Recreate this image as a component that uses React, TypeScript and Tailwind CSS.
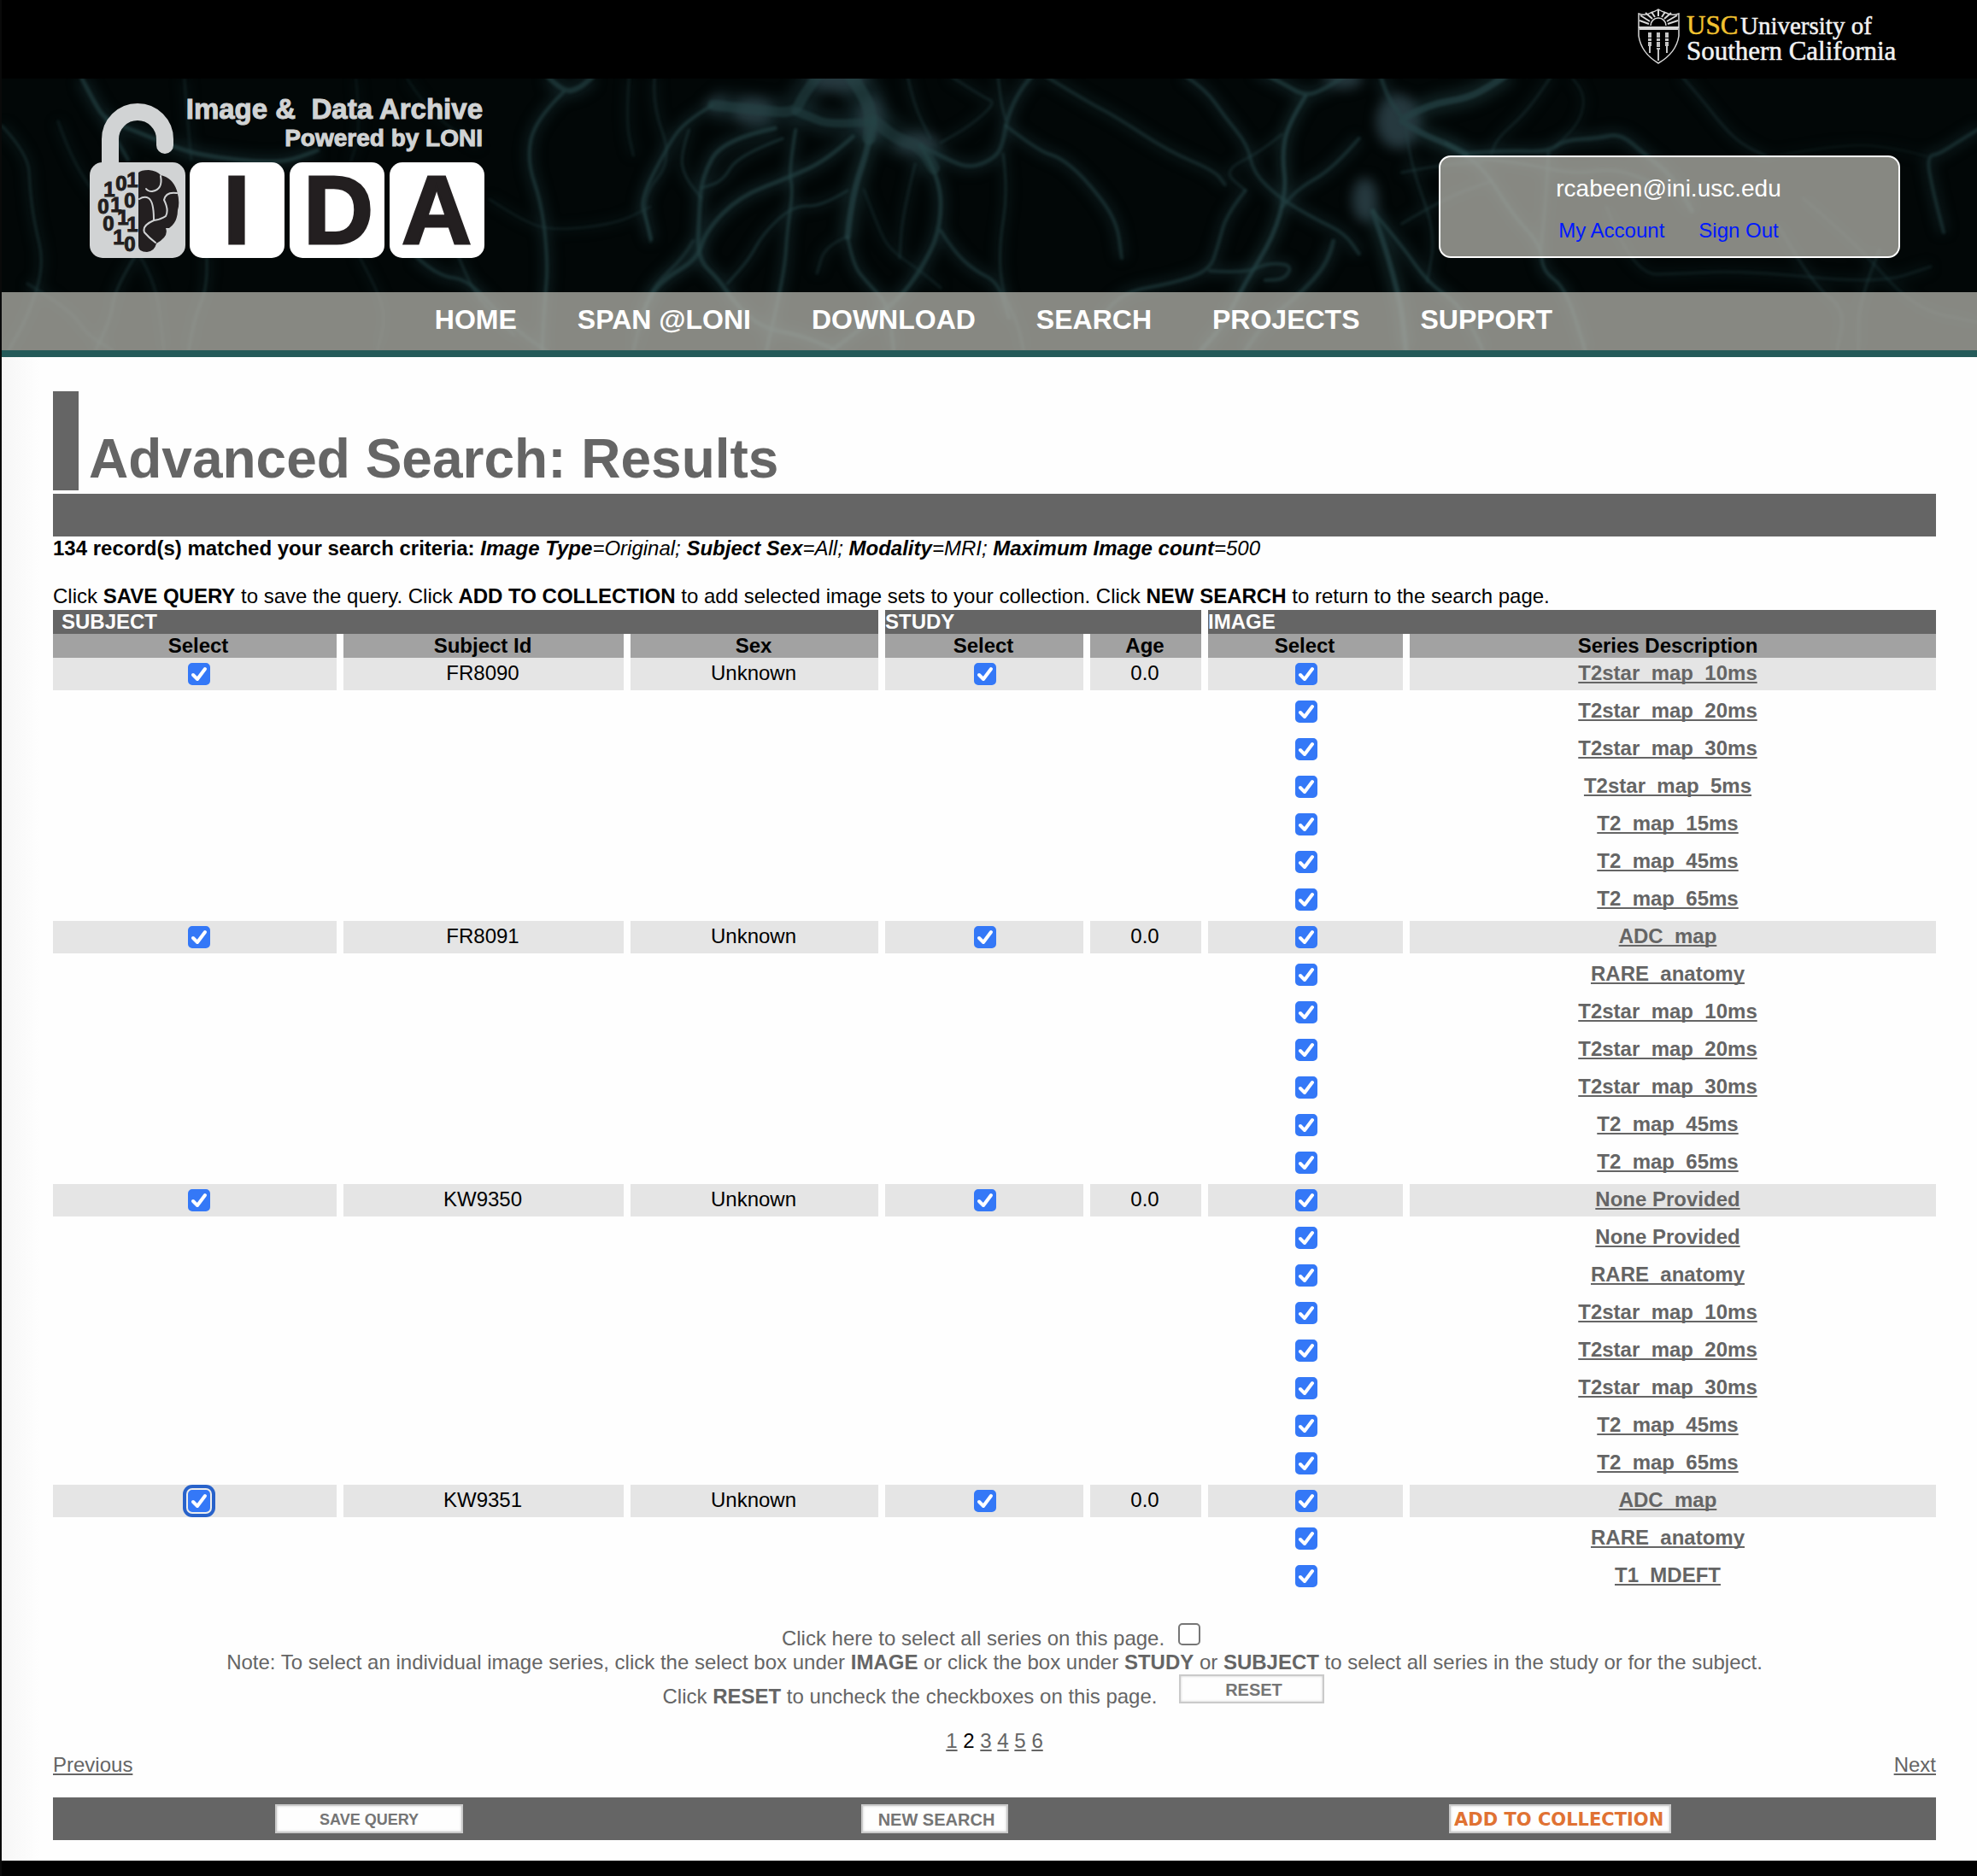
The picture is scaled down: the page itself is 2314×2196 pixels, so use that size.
import React from "react";

type Point = [number, number];
type Fiber = { width: number; tone: number; points: Point[] };

const fibers: Fiber[] = [
  { width: 5, tone: 0.8, points: [[94, 0], [110, 31], [122, 48], [148, 58], [204, 81], [240, 91], [326, 100], [370, 84]] },
  { width: 4, tone: 0.7, points: [[122, 48], [136, 74], [148, 95]] },
  { width: 3, tone: 0.6, points: [[0, 55], [31, 88], [33, 130], [38, 168], [50, 218], [31, 278], [8, 318]] },
  { width: 3, tone: 0.6, points: [[158, 205], [133, 245], [128, 280], [110, 318]] },
  { width: 3, tone: 0.6, points: [[240, 205], [242, 241], [226, 280], [219, 318]] },
  { width: 3, tone: 0.4, points: [[66, 50], [82, 96], [120, 150], [180, 230], [190, 318]] },
  { width: 3, tone: 0.4, points: [[214, 0], [217, 40], [222, 95]] },
  { width: 2, tone: 0.4, points: [[415, 0], [421, 60], [408, 100]] },
  { width: 2, tone: 0.4, points: [[475, 0], [500, 40], [560, 80]] },
  { width: 2, tone: 0.5, points: [[417, 205], [439, 245], [450, 280], [440, 318]] },
  { width: 6, tone: 0.8, points: [[640, -2], [658, 16], [676, 12], [692, -2]] },
  { width: 4, tone: 0.8, points: [[658, 16], [625, 48], [615, 95], [633, 148], [640, 218], [636, 262], [633, 318]] },
  { width: 3, tone: 0.5, points: [[765, -2], [762, 30], [786, 95], [750, 138], [760, 191]] },
  { width: 3, tone: 0.4, points: [[735, -2], [731, 50], [740, 90]] },
  { width: 2, tone: 0.5, points: [[571, 141], [612, 168], [648, 178], [720, 170], [760, 150]] },
  { width: 4, tone: 0.7, points: [[485, 208], [510, 231], [546, 235], [582, 275], [612, 301], [640, 320]] },
  { width: 3, tone: 0.6, points: [[535, 208], [546, 235], [562, 262], [600, 300]] },
  { width: 4, tone: 0.6, points: [[810, 190], [800, 208], [765, 241], [752, 270], [740, 318]] },
  { width: 3, tone: 0.5, points: [[30, 240], [80, 270], [100, 300], [130, 318]] },
  { width: 12, tone: 0.7, points: [[960, -8], [938, 20], [930, 41], [880, 36], [833, 31]] },
  { width: 4, tone: 0.8, points: [[833, 31], [800, 50], [779, 81], [748, 141], [755, 165], [761, 188]] },
  { width: 10, tone: 0.7, points: [[930, 38], [950, 46], [967, 53], [1021, 51]] },
  { width: 15, tone: 0.8, points: [[991, -8], [1012, 20], [1019, 48], [1016, 70]] },
  { width: 7, tone: 0.9, points: [[1021, 48], [1015, 81], [1000, 125], [993, 165], [991, 185]] },
  { width: 4, tone: 0.8, points: [[991, 185], [997, 218], [1015, 240], [1039, 265], [1045, 318]] },
  { width: 5, tone: 0.8, points: [[997, 68], [967, 95], [924, 115], [864, 138], [825, 178], [815, 211], [780, 232], [761, 251], [745, 290]] },
  { width: 5, tone: 0.8, points: [[906, 58], [845, 71], [820, 115], [817, 160], [815, 211], [840, 235], [858, 262], [890, 292], [935, 300], [973, 316]] },
  { width: 3, tone: 0.7, points: [[915, 70], [862, 90], [845, 120], [820, 128]] },
  { width: 4, tone: 0.8, points: [[930, 60], [922, 108], [927, 131], [920, 180], [918, 215], [909, 262], [896, 318]] },
  { width: 3, tone: 0.7, points: [[991, 131], [960, 150], [928, 148], [892, 181], [876, 211], [850, 240]] },
  { width: 3, tone: 0.6, points: [[805, 60], [795, 90], [800, 115], [820, 140]] },
  { width: 3, tone: 0.5, points: [[991, 185], [965, 195], [955, 228]] },
  { width: 14, tone: 0.6, points: [[1021, 48], [1045, 70], [1076, 78], [1092, 105]] },
  { width: 5, tone: 0.8, points: [[1076, 78], [1100, 115], [1100, 178], [1076, 225], [1051, 258], [1010, 290], [973, 318]] },
  { width: 4, tone: 0.7, points: [[1100, 178], [1115, 202], [1140, 225], [1167, 238], [1180, 280]] },
  { width: 3, tone: 0.4, points: [[1010, 130], [1027, 175], [1040, 200], [1076, 225], [1100, 245]] },
  { width: 3, tone: 0.5, points: [[1070, 100], [1055, 160], [1052, 210]] },
  { width: 5, tone: 0.7, points: [[1076, 78], [1110, 96], [1136, 105], [1165, 92], [1173, 75], [1178, 45], [1192, 15], [1209, -6]] },
  { width: 3, tone: 0.6, points: [[1167, -4], [1170, 25], [1176, 48]] },
  { width: 3, tone: 0.5, points: [[1061, -4], [1068, 30], [1088, 70]] },
  { width: 3, tone: 0.5, points: [[1110, -4], [1150, 22], [1165, 28], [1135, 55], [1100, 75]] },
  { width: 4, tone: 0.7, points: [[1176, 55], [1215, 85], [1240, 92], [1270, 118], [1306, 165], [1312, 210]] },
  { width: 3, tone: 0.6, points: [[1173, 88], [1179, 131], [1168, 198], [1172, 251], [1190, 285], [1197, 318]] },
  { width: 4, tone: 0.6, points: [[1221, -4], [1270, 26], [1306, 45], [1367, 85], [1421, 108], [1433, 124]] },
  { width: 5, tone: 0.8, points: [[1470, -10], [1500, 5], [1527, 21], [1550, 12], [1575, -4]] },
  { width: 5, tone: 0.9, points: [[1527, 21], [1506, 55], [1500, 90], [1505, 131], [1490, 185], [1457, 238], [1430, 290], [1405, 318]] },
  { width: 4, tone: 0.7, points: [[1385, -4], [1410, 12], [1433, 45], [1460, 78], [1466, 110], [1497, 140], [1540, 165], [1573, 181], [1590, 205]] },
  { width: 4, tone: 0.7, points: [[1590, 70], [1560, 105], [1520, 128], [1500, 150]] },
  { width: 4, tone: 0.7, points: [[1457, 131], [1435, 158], [1425, 195], [1415, 225], [1370, 240], [1312, 250], [1280, 290]] },
  { width: 4, tone: 0.7, points: [[1415, 225], [1457, 228], [1482, 216], [1512, 218], [1503, 235], [1480, 236]] },
  { width: 3, tone: 0.5, points: [[1500, 65], [1476, 85], [1430, 108], [1457, 131]] },
  { width: 5, tone: 0.7, points: [[1560, 190], [1555, 215], [1518, 255], [1480, 285], [1457, 318]] },
  { width: 6, tone: 0.9, points: [[1606, 155], [1620, 195], [1630, 230], [1640, 270], [1645, 318]] },
  { width: 4, tone: 0.8, points: [[1606, 155], [1640, 195], [1670, 238], [1704, 262], [1722, 290], [1735, 318]] },
  { width: 5, tone: 0.7, points: [[1615, -4], [1622, 20], [1640, 45]] },
  { width: 8, tone: 0.9, points: [[1645, 45], [1672, 30], [1717, 23], [1745, 8], [1765, -6]] },
  { width: 7, tone: 0.9, points: [[1640, 50], [1662, 64], [1692, 76], [1715, 88]] },
  { width: 4, tone: 0.8, points: [[1692, 76], [1730, 95], [1769, 158], [1803, 195], [1805, 225], [1832, 245], [1855, 318]] },
  { width: 5, tone: 0.7, points: [[1712, 88], [1760, 84], [1812, 86], [1830, 72], [1870, 70], [1896, 64], [1924, 88], [1958, 115], [1980, 155]] },
  { width: 4, tone: 0.6, points: [[1715, 92], [1780, 98], [1840, 112], [1890, 105], [1930, 120]] },
  { width: 4, tone: 0.6, points: [[1812, 86], [1810, 130], [1803, 200]] },
  { width: 3, tone: 0.5, points: [[1645, 60], [1650, 100], [1680, 180], [1670, 238]] },
  { width: 3, tone: 0.5, points: [[1640, 110], [1690, 100], [1735, 98]] },
  { width: 3, tone: 0.5, points: [[1640, 170], [1690, 140], [1745, 120]] },
  { width: 3, tone: 0.5, points: [[1816, -4], [1800, 20], [1780, 45], [1752, 70], [1745, 88]] },
  { width: 2, tone: 0.5, points: [[1840, 0], [1855, 15], [1850, 50], [1820, 80]] },
  { width: 3, tone: 0.5, points: [[1967, -4], [1990, 22], [2018, 58], [2040, 78], [2070, 92]] },
  { width: 2, tone: 0.3, points: [[2070, 92], [2160, 75], [2220, 82], [2255, 91]] },
  { width: 4, tone: 0.7, points: [[2318, 58], [2290, 75], [2270, 88], [2255, 91], [2262, 130], [2275, 180]] },
  { width: 3, tone: 0.4, points: [[1880, 150], [1910, 230], [1970, 228], [2040, 225], [2200, 240], [2260, 220]] },
  { width: 3, tone: 0.5, points: [[2080, 170], [2120, 240], [2160, 270], [2150, 318]] },
  { width: 3, tone: 0.5, points: [[2200, 200], [2175, 260], [2175, 318]] },
  { width: 3, tone: 0.4, points: [[2110, 140], [2170, 190], [2240, 270], [2314, 285]] },
];

const somas = [
  { cx: 980, cy: 0, rx: 34, ry: 16 },
  { cx: 1018, cy: 46, rx: 14, ry: 26 },
  { cx: 880, cy: 38, rx: 24, ry: 16 },
  { cx: 838, cy: 30, rx: 14, ry: 8 },
  { cx: 1072, cy: 76, rx: 26, ry: 12 },
  { cx: 1636, cy: 50, rx: 26, ry: 32 },
  { cx: 1597, cy: 142, rx: 15, ry: 26 },
  { cx: 1572, cy: 0, rx: 22, ry: 12 },
];

function smoothPath(points: Point[]) {
  let d = `M${points[0][0]} ${points[0][1]}`;
  for (let i = 1; i < points.length - 1; i++) {
    const [x, y] = points[i];
    const [nx, ny] = points[i + 1];
    d += ` Q${x} ${y} ${(x + nx) / 2} ${(y + ny) / 2}`;
  }
  const last = points[points.length - 1];
  return `${d} L${last[0]} ${last[1]}`;
}

function NeuronBackdrop() {
  return (
    <svg
      aria-hidden="true"
      viewBox="0 0 2314 318"
      preserveAspectRatio="none"
      className="absolute inset-0 size-full"
    >
      <defs>
        <filter id="glow" x="-5%" y="-20%" width="110%" height="140%" colorInterpolationFilters="sRGB">
          <feGaussianBlur stdDeviation="7" />
        </filter>
        <filter id="soft" x="-5%" y="-5%" width="110%" height="110%" colorInterpolationFilters="sRGB">
          <feGaussianBlur stdDeviation="1.5" />
        </filter>
      </defs>
      <g filter="url(#glow)" fill="none" stroke="#1a3336">
        {fibers.map((f, i) => (
          <path key={i} d={smoothPath(f.points)} strokeWidth={f.width * 3} strokeOpacity={f.tone * 0.6} />
        ))}
        {somas.map((s, i) => (
          <ellipse key={i} {...s} fill="#26393f" stroke="none" />
        ))}
      </g>
      <g filter="url(#soft)" fill="none" stroke="#254345" strokeLinecap="round">
        {fibers.map((f, i) => (
          <path key={i} d={smoothPath(f.points)} strokeWidth={f.width} strokeOpacity={f.tone * 0.75} />
        ))}
      </g>
    </svg>
  );
}

const digits: [string, number, number][] = [
  ["1", 38, 130], ["0", 52, 123], ["1", 65, 119],
  ["0", 31, 150], ["1", 46, 148], ["0", 62, 143],
  ["1", 54, 163], ["0", 37, 170], ["1", 65, 171],
  ["1", 49, 186], ["0", 62, 194],
];

function IdaLogo() {
  return (
    <svg viewBox="0 0 478 220" className="h-[220px] w-[478px]" role="img" aria-label="IDA">
      <path d="M39 96V63a32 32 0 0 1 64 0V70" fill="none" stroke="#d1d3d4" strokeWidth="20" strokeLinecap="round" />
      <rect x="15" y="90" width="112" height="112" rx="15" fill="#d1d3d4" />
      <rect x="132" y="90" width="111" height="112" rx="15" fill="#fff" />
      <rect x="249" y="90" width="111" height="112" rx="15" fill="#fff" />
      <rect x="366" y="90" width="111" height="112" rx="15" fill="#fff" />
      <g fill="#231f20" fontFamily="'Liberation Sans', sans-serif" fontWeight="700" fontSize="24" textAnchor="middle" stroke="#231f20" strokeWidth="1">
        {digits.map(([t, x, y], i) => (
          <text key={i} x={x} y={y}>{t}</text>
        ))}
      </g>
      <path
        d="M72 102Q75 99 84 99Q94 100 98 105Q112 108 117 123Q121 137 118 146Q118 160 108 167L104 167Q108 177 93 185Q91 194 82 195Q72 195 72 188z"
        fill="#231f20"
      />
      <g fill="none" stroke="#d1d3d4" strokeWidth="2" strokeLinecap="round">
        <path d="M98 106Q101 122 88 124Q83 124 81 121" />
        <path d="M73 133Q79 129 84 132Q90 136 90 157" />
        <path d="M117 126Q104 124 102 134Q108 146 104 153Q98 157 90 158Q76 164 79 172Q84 178 92 184" />
      </g>
      <g fill="#231f20" stroke="#231f20" strokeWidth="3" fontFamily="'Liberation Sans', sans-serif" fontWeight="700" fontSize="113" textAnchor="middle">
        <text x="187" y="185">I</text>
        <text x="306" y="185">D</text>
        <text x="421" y="185">A</text>
      </g>
      <g fill="#d1d3d4" stroke="#d1d3d4" strokeWidth="1" fontFamily="'Liberation Sans', sans-serif" fontWeight="700" textAnchor="end">
        <text x="475" y="39" fontSize="33">Image &amp;&#160; Data Archive</text>
        <text x="475" y="71" fontSize="28">Powered by LONI</text>
      </g>
    </svg>
  );
}

function UscLogo() {
  return (
    <svg viewBox="0 0 304 72" className="h-[72px] w-[304px]" role="img" aria-label="USC University of Southern California">
      <g fill="none" stroke="#d8d8d8" strokeWidth="1.5">
        <path d="M2 8q8 3 14-1q6-2 9-4q3 2 9 4q7 4 15 1v26q-3 20-24 32q-20-12-23-32z" />
        <path d="M2 24h47M3 26h45" strokeWidth="2" />
        <path d="M16 22a9 9 0 0 1 18 0" />
        <path d="M14 20L3 16M15 17L4 10M18 14L10 7M21 12L17 6M25 11V3M29 12L33 6M32 14L40 7M35 17L47 10M36 20L48 16" strokeWidth="2" />
      </g>
      <g fill="none" stroke="#c4c4c4">
        <path d="M15 30v16M25 30v20M35 30v16" strokeWidth="4" strokeDasharray="6 1 3 1" />
        <path d="M15 46v8M25 50v13M35 46v8" strokeWidth="2" />
      </g>
      <g fontFamily="'Liberation Serif', serif">
        <text x="58" y="32" fontSize="31" fill="#f2c230" stroke="#f2c230" strokeWidth=".5">USC</text>
        <text x="121" y="32" fontSize="29" fill="#f2f2f2" stroke="#f2f2f2" strokeWidth=".5">University of</text>
        <text x="58" y="62" fontSize="31" fill="#f2f2f2" stroke="#f2f2f2" strokeWidth=".5">Southern California</text>
      </g>
    </svg>
  );
}

function Checkbox({ label, checked = true, focused = false }: { label: string; checked?: boolean; focused?: boolean }) {
  return (
    <span className="inline-grid align-top">
      <input
        type="checkbox"
        aria-label={label}
        defaultChecked={checked}
        className={
          "peer col-start-1 row-start-1 size-[26px] appearance-none rounded-[5px] border-2 border-[#767676] bg-white checked:border-[#3478f7] checked:bg-[#3478f7] " +
          (focused ? "shadow-[0_0_0_2px_#ededed,0_0_0_6px_#2862ca]" : "")
        }
      />
      <svg
        viewBox="0 0 26 26"
        className="pointer-events-none invisible col-start-1 row-start-1 size-[26px] peer-checked:visible"
        fill="none"
        stroke="#fff"
        strokeWidth="4"
        strokeLinecap="round"
        strokeLinejoin="round"
      >
        <path d="M6 14L11 19L20 7" />
      </svg>
    </span>
  );
}

const navItems = ["HOME", "SPAN @LONI", "DOWNLOAD", "SEARCH", "PROJECTS", "SUPPORT"];

const subjects = [
  { id: "FR8090", series: ["T2star_map_10ms", "T2star_map_20ms", "T2star_map_30ms", "T2star_map_5ms", "T2_map_15ms", "T2_map_45ms", "T2_map_65ms"] },
  { id: "FR8091", series: ["ADC_map", "RARE_anatomy", "T2star_map_10ms", "T2star_map_20ms", "T2star_map_30ms", "T2_map_45ms", "T2_map_65ms"] },
  { id: "KW9350", series: ["None Provided", "None Provided", "RARE_anatomy", "T2star_map_10ms", "T2star_map_20ms", "T2star_map_30ms", "T2_map_45ms", "T2_map_65ms"] },
  { id: "KW9351", series: ["ADC_map", "RARE_anatomy", "T1_MDEFT"] },
];

const th = "border-r-8 border-[#fefefe] bg-[#a2a2a2] p-0 pr-[2px]";
const groupTh = "border-r-8 border-[#fefefe] bg-[#656565] p-0 text-left text-white";
const cell = "h-11 border-r-8 border-b-6 border-[#fefefe] align-top";

function ResultsTable() {
  return (
    <table className="w-full table-fixed border-separate border-spacing-0 text-center">
      <colgroup>
        <col className="w-[340px]" />
        <col className="w-[336px]" />
        <col className="w-[298px]" />
        <col className="w-[240px]" />
        <col className="w-[138px]" />
        <col className="w-[236px]" />
        <col />
      </colgroup>
      <thead>
        <tr>
          <th colSpan={3} className={groupTh}><span className="pl-[10px]">SUBJECT</span></th>
          <th colSpan={2} className={groupTh}>STUDY</th>
          <th colSpan={2} className="bg-[#656565] p-0 text-left text-white">IMAGE</th>
        </tr>
        <tr>
          <th className={th}><span className="pl-[10px]">Select</span></th>
          <th className={th}>Subject Id</th>
          <th className={th}>Sex</th>
          <th className={th}>Select</th>
          <th className={th}>Age</th>
          <th className={th}>Select</th>
          <th className="bg-[#a2a2a2] p-0 pr-3">Series Description</th>
        </tr>
      </thead>
      <tbody>
        {subjects.map((s) =>
          s.series.map((name, i) => {
            const first = i === 0;
            const shade = first ? " bg-[#e5e5e5]" : "";
            return (
              <tr key={s.id + i}>
                <td className={cell + " pt-1.5 pl-[10px]" + shade}>
                  {first && <Checkbox label={`Select subject ${s.id}`} focused={s.id === "KW9351"} />}
                </td>
                <td className={cell + " pt-1 pr-[2px]" + shade}>{first && s.id}</td>
                <td className={cell + " pt-1 pr-[2px]" + shade}>{first && "Unknown"}</td>
                <td className={cell + " pt-1.5 pl-[2px]" + shade}>{first && <Checkbox label={`Select study of ${s.id}`} />}</td>
                <td className={cell + " pt-1 pr-[2px]" + shade}>{first && "0.0"}</td>
                <td className={cell + " pt-1.5 pl-[2px]" + shade}>
                  <Checkbox label={`Select image ${name} of ${s.id}`} />
                </td>
                <td className={"h-11 border-b-6 border-[#fefefe] pt-1 pr-3 align-top" + shade}>
                  <a href="#series" className="font-bold text-[#656565] underline [text-decoration-skip-ink:none]">{name}</a>
                </td>
              </tr>
            );
          })
        )}
      </tbody>
    </table>
  );
}

const buttonFrame = "h-[34px] overflow-hidden border-2 border-[#cacaca] bg-[#fefefe] font-bold whitespace-nowrap shadow-[inset_0_0_3px_#cccccc]";

export default function App() {
  return (
    <div className="min-h-screen border-l-2 border-[#0a0a0a] bg-black font-['Liberation_Sans',Arial,sans-serif] text-[24px] leading-[28px] text-black">
      <div className="flex h-[92px] justify-end bg-black pt-2 pr-[94px]">
        <UscLogo />
      </div>

      <header className="relative border-b-8 border-[#245a59] bg-[#020707]">
        <NeuronBackdrop />
        <div className="relative flex h-[250px] items-start justify-between pt-2 pr-[90px] pl-[88px]">
          <IdaLogo />
          <div className="mt-[82px] flex h-[120px] w-[540px] flex-col items-center rounded-[14px] border-2 border-white bg-[#adada5]/78 pt-5 pr-[2px]">
            <div className="text-[28px] leading-[34px] text-white">rcabeen@ini.usc.edu</div>
            <div className="mt-[18px] flex gap-10 text-[#0019ff]">
              <a href="#account">My Account</a>
              <a href="#signout">Sign Out</a>
            </div>
          </div>
        </div>
        <nav className="relative flex h-[68px] items-center justify-center gap-[71px] bg-[#adada5]/78 pl-[10px] text-[32px] font-bold text-white">
          {navItems.map((n) => (
            <a key={n} href="#nav" className="pb-1">{n}</a>
          ))}
        </nav>
      </header>

      <main className="bg-[#fefefe] bg-linear-to-r from-[#f6f6f6] to-[#fefefe] to-[44px] pt-10 pr-12 pb-6 pl-[60px]">
        <div className="flex h-[116px] items-end border-l-[30px] border-[#656565] pl-3">
          <h1 className="text-[64px] leading-[74px] font-bold text-[#656565]">Advanced Search: Results</h1>
        </div>
        <div className="mt-1 h-[50px] bg-[#656565]" />
        <p>
          <b>134 record(s) matched your search criteria: </b>
          <i><b>Image Type</b>=Original; <b>Subject Sex</b>=All; <b>Modality</b>=MRI; <b>Maximum Image count</b>=500</i>
        </p>
        <p className="mt-7 mb-[2px]">
          Click <b>SAVE QUERY</b> to save the query. Click <b>ADD TO COLLECTION</b> to add selected image sets to your
          collection. Click <b>NEW SEARCH</b> to return to the search page.
        </p>

        <ResultsTable />

        <div className="mt-[30px] text-center text-[#656565]">
          <div className="flex h-8 items-start justify-center gap-4 pr-2">
            <span className="pt-1">Click here to select all series on this page.</span>
            <Checkbox label="Select all series on this page" checked={false} />
          </div>
          <p>
            Note: To select an individual image series, click the select box under <b>IMAGE</b> or click the box under{" "}
            <b>STUDY</b> or <b>SUBJECT</b> to select all series in the study or for the subject.
          </p>
          <div className="flex h-10 justify-center gap-[26px] pr-[2px]">
            <span className="pt-3">Click <b>RESET</b> to uncheck the checkboxes on this page.</span>
            <button type="button" className={buttonFrame + " w-[170px] pt-[2px] pl-1 text-[20px] text-[#757575]"}>RESET</button>
          </div>
          <nav aria-label="Pages" className="mt-6">
            <a href="#1" className="underline">1</a> <span className="text-black">2</span>{" "}
            <a href="#3" className="underline">3</a> <a href="#4" className="underline">4</a>{" "}
            <a href="#5" className="underline">5</a> <a href="#6" className="underline">6</a>
          </nav>
          <div className="flex justify-between">
            <a href="#previous" className="underline">Previous</a>
            <a href="#next" className="underline">Next</a>
          </div>
        </div>

        <div className="mt-6 grid h-[50px] grid-cols-[740fr_584fr_880fr] place-items-center bg-[#656565]">
          <button type="button" className={buttonFrame + " w-[220px] pt-[2px] text-[18px] text-[#757575]"}>SAVE QUERY</button>
          <button type="button" className={buttonFrame + " w-[172px] pt-[2px] pl-1 text-[20px] text-[#757575]"}>NEW SEARCH</button>
          <button type="button" className={buttonFrame + " w-[260px] pt-[2px] pl-1 text-left font-['DejaVu_Sans',sans-serif] text-[21px] text-[#e07233]"}>
            ADD TO COLLECTION
          </button>
        </div>
      </main>
    </div>
  );
}
